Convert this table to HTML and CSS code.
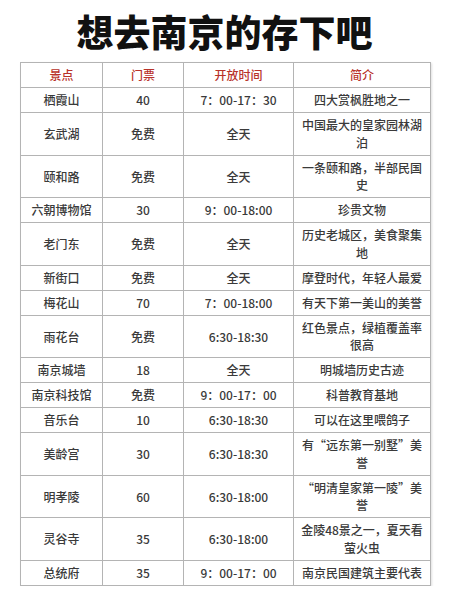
FILE: index.html
```html
<!DOCTYPE html>
<html lang="zh">
<head>
<meta charset="utf-8">
<link rel="stylesheet" href="styles.css">
</head>
<body>
<div class="page">
  <h1 class="title">想去南京的存下吧</h1>
  <table class="spots">
    <colgroup>
      <col class="c-name"><col class="c-price"><col class="c-time"><col class="c-desc">
    </colgroup>
    <thead>
      <tr><th>景点</th><th>门票</th><th>开放时间</th><th>简介</th></tr>
    </thead>
    <tbody>
      <tr><td>栖霞山</td><td>40</td><td>7：00-17：30</td><td>四大赏枫胜地之一</td></tr>
      <tr><td>玄武湖</td><td>免费</td><td>全天</td><td>中国最大的皇家园林湖泊</td></tr>
      <tr><td>颐和路</td><td>免费</td><td>全天</td><td>一条颐和路，半部民国史</td></tr>
      <tr><td>六朝博物馆</td><td>30</td><td>9：00-18:00</td><td>珍贵文物</td></tr>
      <tr><td>老门东</td><td>免费</td><td>全天</td><td>历史老城区，美食聚集地</td></tr>
      <tr><td>新街口</td><td>免费</td><td>全天</td><td>摩登时代，年轻人最爱</td></tr>
      <tr><td>梅花山</td><td>70</td><td>7：00-18:00</td><td>有天下第一美山的美誉</td></tr>
      <tr><td>雨花台</td><td>免费</td><td>6:30-18:30</td><td>红色景点，绿植覆盖率很高</td></tr>
      <tr><td>南京城墙</td><td>18</td><td>全天</td><td>明城墙历史古迹</td></tr>
      <tr><td>南京科技馆</td><td>免费</td><td>9：00-17：00</td><td>科普教育基地</td></tr>
      <tr><td>音乐台</td><td>10</td><td>6:30-18:30</td><td>可以在这里喂鸽子</td></tr>
      <tr><td>美龄宫</td><td>30</td><td>6:30-18:30</td><td>有“远东第一别墅”美誉</td></tr>
      <tr><td>明孝陵</td><td>60</td><td>6:30-18:00</td><td>“明清皇家第一陵”美誉</td></tr>
      <tr><td>灵谷寺</td><td>35</td><td>6:30-18:00</td><td>金陵48景之一，夏天看萤火虫</td></tr>
      <tr><td>总统府</td><td>35</td><td>9：00-17：00</td><td>南京民国建筑主要代表</td></tr>
    </tbody>
  </table>
</div>
</body>
</html>
```

FILE: styles.css
```css
html, body {
  margin: 0;
  padding: 0;
  background: #ffffff;
}

.page {
  width: 449px;
  padding-top: 8px;
  font-family: "Noto Sans CJK SC", "Noto Sans", sans-serif;
}

.title {
  margin: 0;
  height: 46px;
  line-height: 46px;
  font-size: 37px;
  font-weight: 900;
  color: #111111;
  text-align: center;
  letter-spacing: 0;
}

.spots {
  margin: 8px 0 0 20px;
  width: 410px;
  border-collapse: collapse;
  table-layout: fixed;
  border: 1px solid #a9a9a9;
  box-shadow: 1px 1px 2px rgba(0, 0, 0, 0.12);
}

.c-name { width: 82px; }
.c-price { width: 81px; }
.c-time { width: 110px; }
.c-desc { width: 137px; }

.spots th,
.spots td {
  border: 1px solid #b4b4b4;
  padding: 3.25px 5px;
  line-height: 17.5px;
  font-size: 12px;
  text-align: center;
  vertical-align: middle;
}

.spots th {
  color: #b8322a;
  font-weight: 500;
}

.spots td {
  color: #3a3a3a;
  font-weight: 500;
}
```
